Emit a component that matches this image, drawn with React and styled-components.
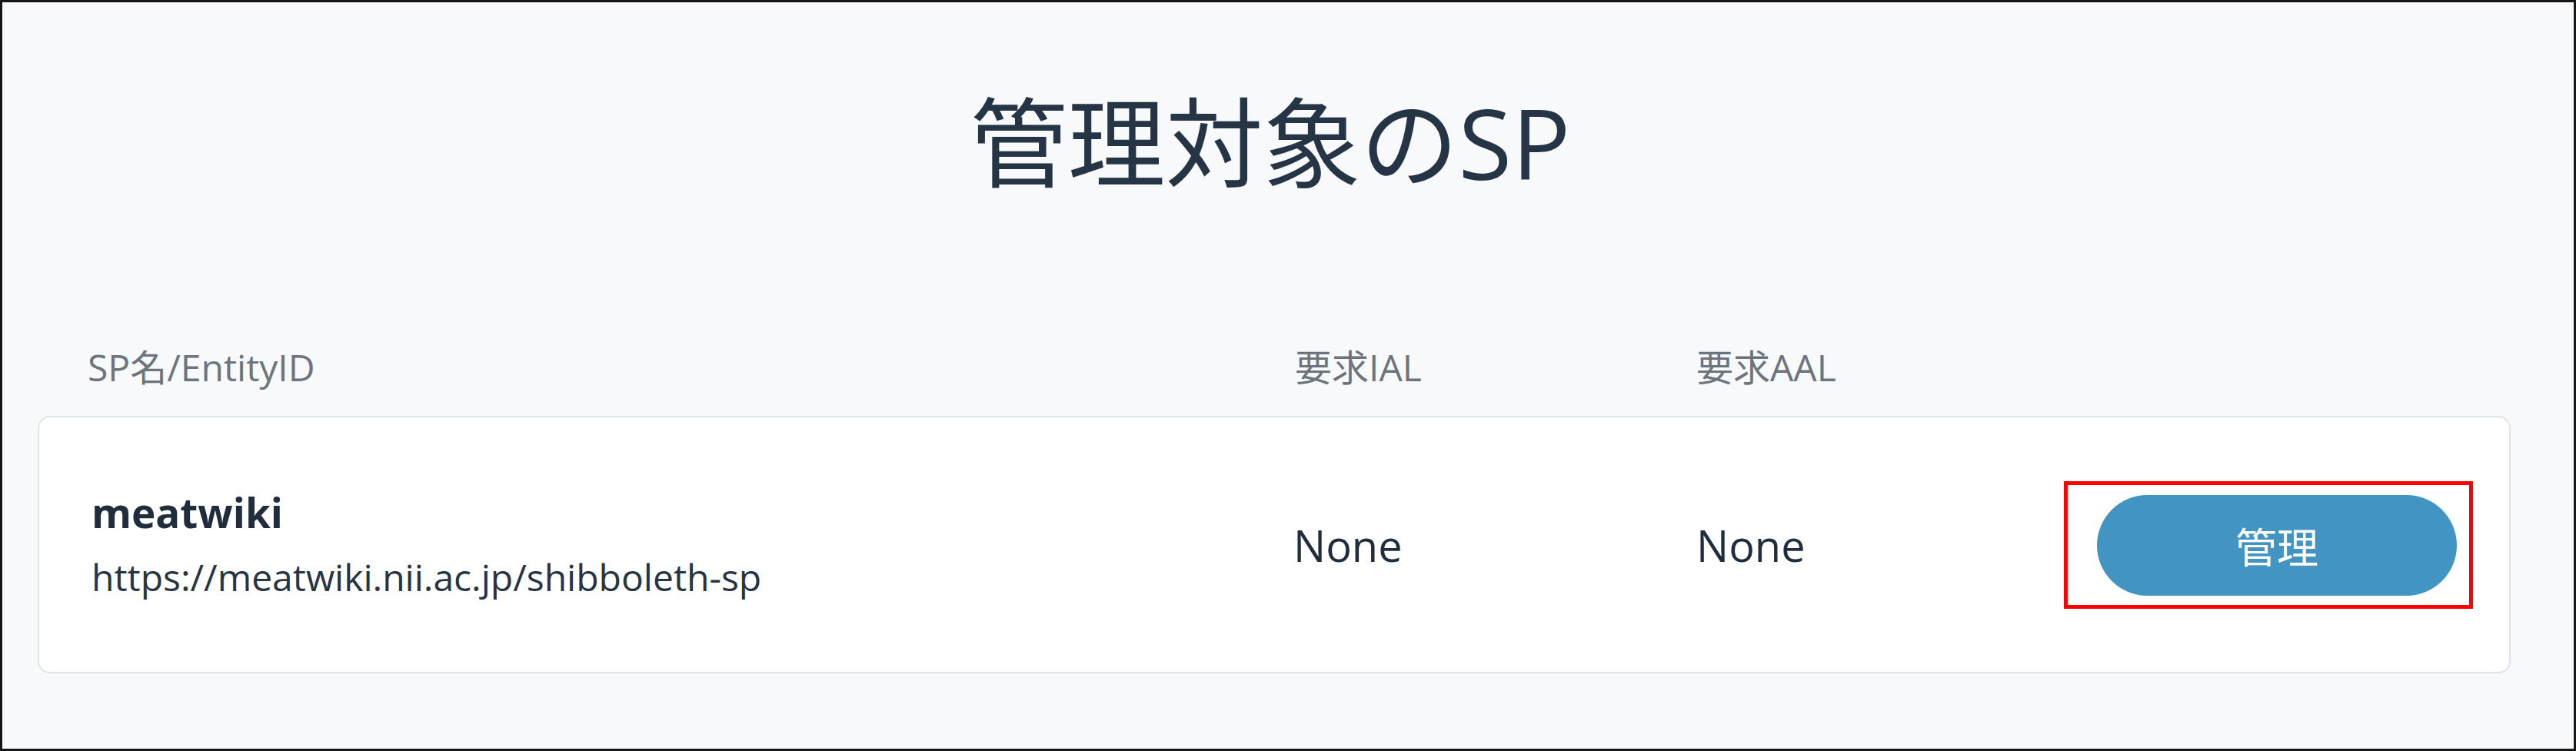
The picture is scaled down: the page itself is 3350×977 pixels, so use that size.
import React from "react";
import styled, { createGlobalStyle } from "styled-components";

const GlobalStyle = createGlobalStyle`
  html, body {
    margin: 0;
    padding: 0;
  }
  body {
    font-family: "Open Sans", "Noto Sans CJK JP", sans-serif;
    background: #ffffff;
  }
`;

const Frame = styled.div`
  box-sizing: border-box;
  width: 3350px;
  height: 977px;
  border: 3px solid #161616;
  background: #f8f9fb;
  padding: 0 82px 0 46px;
  overflow: hidden;
`;

const Title = styled.h1`
  margin: 118px 0 0;
  padding-right: 10px;
  font-size: 127px;
  line-height: 1;
  font-weight: 400;
  color: #263546;
  text-align: center;
`;

const HeaderRow = styled.div`
  display: grid;
  grid-template-columns: 1570px 522px 1fr;
  margin-top: 206px;
  padding-left: 65px;
`;

const HeaderCell = styled.div`
  font-size: 48px;
  line-height: 1;
  color: #6c757d;
`;

const Card = styled.div`
  margin-top: 39px;
  display: grid;
  grid-template-columns: 1563px 524px 478px 532px;
  align-items: center;
  padding: 83px 47px 82px 68px;
  background: #ffffff;
  border: 2px solid #dce4ee;
  border-radius: 16px;
`;

const NameBlock = styled.div`
  display: flex;
  flex-direction: column;
  gap: 20px;
`;

const SpName = styled.div`
  font-size: 53px;
  line-height: 64px;
  font-weight: 700;
  color: #1f2d3d;
`;

const EntityId = styled.div`
  font-size: 48px;
  line-height: 64px;
  color: #263444;
`;

const Level = styled.div`
  font-size: 56px;
  line-height: 1;
  color: #1f2d3d;
`;

const Highlight = styled.div`
  box-sizing: border-box;
  width: 532px;
  height: 166px;
  border: 5px solid #ff0000;
  padding: 13px 16px 12px 38px;
`;

const ManageButton = styled.button`
  width: 468px;
  height: 131px;
  border: none;
  border-radius: 66px;
  background: #4294c2;
  color: #ffffff;
  font-family: "Open Sans", "Noto Sans CJK JP", sans-serif;
  font-size: 54px;
  cursor: pointer;
  padding: 0;
`;

const sps = [
  {
    name: "meatwiki",
    entityId: "https://meatwiki.nii.ac.jp/shibboleth-sp",
    ial: "None",
    aal: "None",
  },
];

export default function App() {
  return (
    <>
      <GlobalStyle />
      <Frame>
        <Title>管理対象のSP</Title>
        <HeaderRow>
          <HeaderCell>SP名/EntityID</HeaderCell>
          <HeaderCell>要求IAL</HeaderCell>
          <HeaderCell>要求AAL</HeaderCell>
        </HeaderRow>
        {sps.map((sp) => (
          <Card key={sp.entityId}>
            <NameBlock>
              <SpName>{sp.name}</SpName>
              <EntityId>{sp.entityId}</EntityId>
            </NameBlock>
            <Level>{sp.ial}</Level>
            <Level>{sp.aal}</Level>
            <Highlight>
              <ManageButton>管理</ManageButton>
            </Highlight>
          </Card>
        ))}
      </Frame>
    </>
  );
}
